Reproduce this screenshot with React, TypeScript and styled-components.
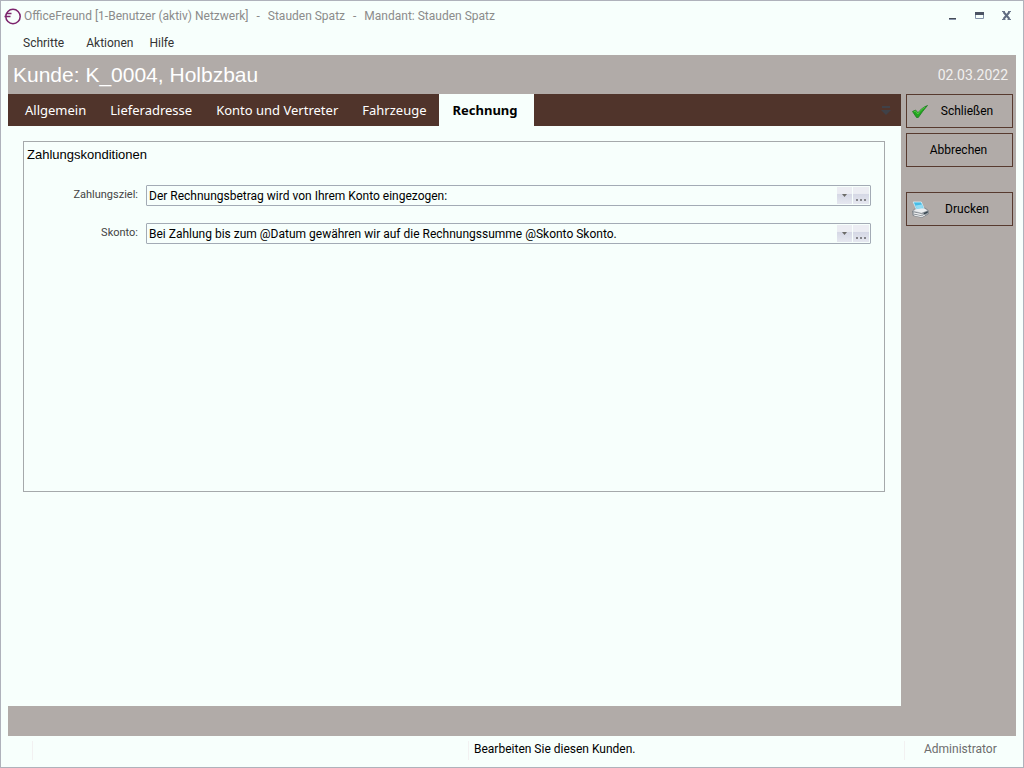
import React from "react";
import styled, { createGlobalStyle } from "styled-components";

const paper = "#f7fffc";
const taupe = "#b1aba8";
const brown = "#50342b";
const line = "#a5a9ab";
const uiFont = `Roboto, "Open Sans", sans-serif`;

const GlobalStyle = createGlobalStyle`
  *, *::before, *::after { box-sizing: border-box; }
  body { margin: 0; background: ${paper}; font-family: ${uiFont}; font-size: 12px; color: #000; }
  button, select { font: inherit; color: inherit; border-radius: 0; margin: 0; }
`;

const Window = styled.div`
  display: flex;
  flex-direction: column;
  min-height: 100vh;
  padding: 0 7px;
  border: 1px solid #afb2bb;
  background: ${paper};
`;

const TitleBar = styled.header`
  display: flex;
  align-items: center;
  height: 30px;
  margin-left: -4px;
  gap: 3px;
`;

const WindowTitle = styled.h1`
  display: flex;
  gap: 8px;
  margin: 0;
  flex: 1;
  font-size: 12px;
  font-weight: 400;
  line-height: 18px;
  color: #8b8b8b;
`;

const WindowControls = styled.div`
  display: flex;
  gap: 11px;
  padding-right: 1px;
`;

const WindowButton = styled.button`
  display: grid;
  place-items: center;
  width: 16px;
  height: 16px;
  padding: 0;
  border: 0;
  background: none;
`;

const MenuBar = styled.nav`
  display: flex;
  height: 24px;
  padding-left: 15px;
`;

const MenuItem = styled.button<{ $gap: number }>`
  padding: 0;
  margin-right: ${(p) => p.$gap}px;
  border: 0;
  background: none;
  color: #333;
  line-height: 24px;
`;

const Frame = styled.div`
  display: flex;
  flex-direction: column;
  flex: 1;
  background: ${taupe};
`;

const RecordHeader = styled.div`
  display: flex;
  align-items: center;
  justify-content: space-between;
  height: 39px;
  padding: 0 8px 0 5px;
  color: #fff;
`;

const RecordTitle = styled.h2`
  margin: 0;
  font: 400 21px/38px "Liberation Sans", Arial, sans-serif;
`;

const RecordDate = styled.time`
  font-size: 14px;
  color: #f2f0ef;
`;

const Body = styled.div`
  display: flex;
  flex: 1;
`;

const Main = styled.main`
  display: flex;
  flex-direction: column;
  flex: 1;
  min-width: 0;
  background: ${paper};
`;

const TabBar = styled.div`
  display: flex;
  align-items: stretch;
  height: 32px;
  padding-left: 5px;
  background: ${brown};
`;

const Tab = styled.button<{ $active?: boolean }>`
  padding: ${(p) => (p.$active ? "0 16px 0 14px" : "0 12px")};
  border: 0;
  background: ${(p) => (p.$active ? paper : "none")};
  color: ${(p) => (p.$active ? "#000" : "#fff")};
  font-family: "Noto Sans", Verdana, sans-serif;
  font-size: 13px;
  font-weight: ${(p) => (p.$active ? 700 : 400)};
  white-space: nowrap;
`;

const TabOverflow = styled.button`
  display: grid;
  place-items: center;
  margin-left: auto;
  width: 30px;
  padding: 0;
  border: 0;
  background: none;
`;

const TabPage = styled.div`
  flex: 1;
  padding: 15px 16px 15px 15px;
`;

const Group = styled.section`
  min-height: 351px;
  padding: 3px 13px 0 3px;
  border: 1px solid ${line};
`;

const GroupTitle = styled.h3`
  margin: 0 0 21px;
  font: 400 13px/19px "Liberation Sans", Arial, sans-serif;
`;

const Field = styled.div`
  display: grid;
  grid-template-columns: 111px 1fr;
  column-gap: 8px;
  margin-bottom: 17px;
`;

const FieldLabel = styled.label`
  font-size: 11px;
  line-height: 20px;
  text-align: right;
  color: #444;
`;

const Combo = styled.div`
  display: flex;
  gap: 1px;
  height: 21px;
  padding: 1px;
  border: 1px solid #a3abb5;
  border-radius: 1px;
  background: ${paper};
`;

const ComboSelect = styled.select`
  appearance: none;
  flex: 1;
  min-width: 0;
  padding: 1px 18px 0 1px;
  border: 0;
  background: none;
  line-height: 16px;
`;

const ComboBox = styled.div`
  position: relative;
  display: flex;
  flex: 1;
  min-width: 0;
`;

const ComboArrow = styled.span`
  position: absolute;
  top: 0;
  right: 0;
  bottom: 0;
  display: grid;
  place-items: center;
  width: 15px;
  background: linear-gradient(#ecedf3 0 38%, #d5d8e5 42%, #e6e8f0);
  pointer-events: none;
`;

const BrowseButton = styled.button`
  display: flex;
  align-items: flex-end;
  justify-content: center;
  width: 16px;
  padding: 0 0 3px;
  border: 0;
  background: linear-gradient(#ecedf3 0 38%, #d5d8e5 42%, #e6e8f0);
`;

const Actions = styled.aside`
  display: flex;
  flex-direction: column;
  gap: 5px;
  width: 115px;
  padding: 0 3px 0 5px;
`;

const ActionButton = styled.button<{ $separated?: boolean }>`
  display: flex;
  align-items: center;
  height: 34px;
  margin-top: ${(p) => (p.$separated ? "20px" : "0")};
  padding: 0 4px 0 5px;
  border: 1px solid #573a2f;
  background: none;
`;

const ActionText = styled.span`
  flex: 1;
  padding-right: 3px;
  text-align: center;
`;

const FooterBand = styled.div`
  height: 30px;
`;

const StatusBar = styled.footer`
  display: grid;
  grid-template-columns: 24px 436px 1fr 112px;
  height: 31px;
  padding: 5px 0 7px;
`;

const StatusCell = styled.div<{ $muted?: boolean }>`
  padding-left: ${(p) => (p.$muted ? "19px" : "5px")};
  border-left: 1px solid #f2f1f1;
  color: ${(p) => (p.$muted ? "#6d6d6d" : "#000")};
  line-height: 17px;

  &:first-child { border-left: 0; }
`;

const AppLogo = () => (
  <svg width="17" height="17" viewBox="0 0 17 17" fill="none" stroke="#7d246d" aria-hidden="true">
    <circle cx="9" cy="8.5" r="7.2" strokeWidth="1.5" />
    <path d="M7.5 5.5H2.5M6.5 8.5H0.5" strokeWidth="1.3" />
  </svg>
);

const CheckIcon = () => (
  <svg width="17" height="17" viewBox="0 0 17 17" aria-hidden="true">
    <path d="M0.5 8.5 3.5 7 6 9.7C8.5 6.5 11.5 4 15.5 2.5 12 6.5 9 10.5 6.3 14.5H4.5Z" fill="#22a51e" stroke="#16751b" strokeWidth="0.7" />
    <path d="M1.8 8.7 3.4 7.9 5.8 11C8 8 10 6 12.8 4.3" fill="none" stroke="#5ed64d" strokeWidth="0.8" />
  </svg>
);

const PrinterIcon = () => (
  <svg width="17" height="17" viewBox="0 0 17 17" aria-hidden="true">
    <path d="M0.5 10 3.5 7.2 13 7 16.3 9.5V13L10 16.4 1 14.5Z" fill="#c3c8cd" stroke="#70777e" strokeWidth="0.7" />
    <path d="M2 9.8 5 8 12.5 7.8 15 9.6 9.5 11.8Z" fill="#eceef0" />
    <path d="M1.2 1H9.3L12 7.3 4.3 8Z" fill="#45bce6" stroke="#d8f2fb" strokeWidth="0.8" />
    <path d="M3.5 4.5 10 3.5 11.3 6.8 4.6 7.5Z" fill="#92dcf3" />
    <path d="M0.8 10.8 9.5 12.6 16 10M1.5 13 9.5 14.8 15.5 12.4" fill="none" stroke="#777e84" strokeWidth="0.8" />
    <path d="M11.5 12 15.8 10.2V11.7L12 13.5Z" fill="#34434d" />
    <path d="M2 12 9.5 13.6M2.3 14.2 9.5 15.6 13 14" fill="none" stroke="#fff" strokeWidth="0.8" />
  </svg>
);

const conditions = [
  { id: "zahlungsziel", label: "Zahlungsziel:", value: "Der Rechnungsbetrag wird von Ihrem Konto eingezogen:" },
  { id: "skonto", label: "Skonto:", value: "Bei Zahlung bis zum @Datum gewähren wir auf die Rechnungssumme @Skonto Skonto." },
];

const tabs = ["Allgemein", "Lieferadresse", "Konto und Vertreter", "Fahrzeuge", "Rechnung"];

export default function App() {
  return (
    <>
      <GlobalStyle />
      <Window>
        <TitleBar>
          <AppLogo />
          <WindowTitle>
            <span>OfficeFreund [1-Benutzer (aktiv) Netzwerk]</span>
            <span>-</span>
            <span>Stauden Spatz</span>
            <span>-</span>
            <span>Mandant: Stauden Spatz</span>
          </WindowTitle>
          <WindowControls>
            <WindowButton aria-label="Minimieren">
              <svg width="10" height="10"><path d="M1 7h7v1H1z" fill="#444a55" /><path d="M1 8h7v1H1z" fill="#8793aa" /></svg>
            </WindowButton>
            <WindowButton aria-label="Maximieren">
              <svg width="10" height="10"><path d="M.5 1.5h8v6h-8z" fill="none" stroke="#8290a8" /><path d="M0 1h9v3H0z" fill="#4c5364" /></svg>
            </WindowButton>
            <WindowButton aria-label="Schließen">
              <svg width="10" height="10"><path d="M1.5 1 7.5 8M7.5 1 1.5 8" stroke="#5f6b80" strokeWidth="2" /><path d="M0 .5h3M6 .5h3M0 8.5h3.5M5.5 8.5h3.5" stroke="#6b768b" /></svg>
            </WindowButton>
          </WindowControls>
        </TitleBar>
        <MenuBar>
          <MenuItem $gap={22}>Schritte</MenuItem>
          <MenuItem $gap={16}>Aktionen</MenuItem>
          <MenuItem $gap={0}>Hilfe</MenuItem>
        </MenuBar>
        <Frame>
          <RecordHeader>
            <RecordTitle>Kunde: K_0004, Holbzbau</RecordTitle>
            <RecordDate dateTime="2022-03-02">02.03.2022</RecordDate>
          </RecordHeader>
          <Body>
            <Main>
              <TabBar role="tablist">
                {tabs.map((name) => (
                  <Tab key={name} role="tab" aria-selected={name === "Rechnung"} $active={name === "Rechnung"}>
                    {name}
                  </Tab>
                ))}
                <TabOverflow aria-label="Weitere Register">
                  <svg width="10" height="10"><path d="M1 1h8v2H1zM0 5h10L5 10z" fill="#3f4148" /></svg>
                </TabOverflow>
              </TabBar>
              <TabPage role="tabpanel">
                <Group>
                  <GroupTitle>Zahlungskonditionen</GroupTitle>
                  {conditions.map((c) => (
                    <Field key={c.id}>
                      <FieldLabel htmlFor={c.id}>{c.label}</FieldLabel>
                      <Combo>
                        <ComboBox>
                          <ComboSelect id={c.id} defaultValue={c.value}>
                            <option>{c.value}</option>
                          </ComboSelect>
                          <ComboArrow>
                            <svg width="5" height="3"><path d="M0 0h5L2.5 3z" fill="#6c6c68" /></svg>
                          </ComboArrow>
                        </ComboBox>
                        <BrowseButton aria-label={`${c.label} auswählen`}>
                          <svg width="10" height="2"><path d="M0 0h2v2H0zM4 0h2v2H4zM8 0h2v2H8z" fill="#85858a" /></svg>
                        </BrowseButton>
                      </Combo>
                    </Field>
                  ))}
                </Group>
              </TabPage>
            </Main>
            <Actions>
              <ActionButton>
                <CheckIcon />
                <ActionText>Schließen</ActionText>
              </ActionButton>
              <ActionButton>
                <ActionText>Abbrechen</ActionText>
              </ActionButton>
              <ActionButton $separated>
                <PrinterIcon />
                <ActionText>Drucken</ActionText>
              </ActionButton>
            </Actions>
          </Body>
          <FooterBand />
        </Frame>
        <StatusBar>
          <StatusCell />
          <StatusCell />
          <StatusCell>Bearbeiten Sie diesen Kunden.</StatusCell>
          <StatusCell $muted>Administrator</StatusCell>
        </StatusBar>
      </Window>
    </>
  );
}
